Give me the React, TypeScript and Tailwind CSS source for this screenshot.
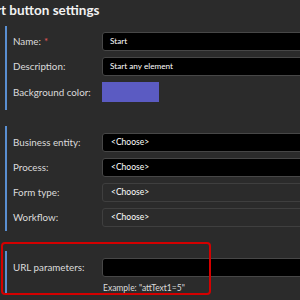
import React from "react";

const font = { fontFamily: "Lato, 'Noto Sans', sans-serif" };

function Row({ label, required, children }: { label: string; required?: boolean; children: React.ReactNode }) {
  return (
    <div className="flex items-center h-[19px]">
      <div className="w-[95px] shrink-0 pl-[6px] text-[9.8px] text-[#dcdcdc] whitespace-nowrap">
        {label}
        {required && <span className="text-[#e05a5a] ml-[3px]">*</span>}
      </div>
      {children}
    </div>
  );
}

function BlackInput({ value }: { value?: string }) {
  return (
    <div className="h-full w-[220px] shrink-0 bg-black border border-[#474747] rounded-[3px] flex items-center pl-[7px] text-[8.2px] text-white whitespace-nowrap">
      {value}
    </div>
  );
}

function Select({ value, dark }: { value: string; dark?: boolean }) {
  return (
    <div
      className={
        dark
          ? "h-full w-[220px] shrink-0 bg-black border border-[#474747] rounded-[3px] flex items-center pl-[8px] text-[8.5px] text-white"
          : "h-full w-[220px] shrink-0 bg-[#2b2b2b] border border-[#3f3f3f] rounded-[3px] flex items-center pl-[8px] text-[8.5px] text-white"
      }
    >
      {value}
    </div>
  );
}

export default function App() {
  return (
    <div className="w-[300px] h-[300px] bg-[#2b2b2b] overflow-hidden flex flex-col" style={font}>
      <div className="shrink-0 -ml-[23px] pt-[1px] h-[20px] text-[13.5px] font-bold text-[#f2f2f2] whitespace-nowrap leading-[18px]">
        Start button settings
      </div>
      <div className="shrink-0 mt-[6px] ml-[5px] border-l-2 border-[#5a8fd2] pt-[6px] pb-[8px] flex flex-col gap-[6px]">
        <Row label="Name:" required>
          <BlackInput value="Start" />
        </Row>
        <Row label="Description:">
          <BlackInput value="Start any element" />
        </Row>
        <div className="flex items-center h-[20px]">
          <div className="w-[95px] shrink-0 pl-[6px] text-[9.8px] text-[#dcdcdc] whitespace-nowrap">Background color:</div>
          <div className="h-full w-[57px] bg-[#5b5bc2]" />
        </div>
      </div>
      <div className="shrink-0 mt-[16px] ml-[5px] border-l-2 border-[#5a8fd2] pt-[7px] pb-[4px] flex flex-col gap-[6px]">
        <Row label="Business entity:">
          <Select value="<Choose>" dark />
        </Row>
        <Row label="Process:">
          <Select value="<Choose>" dark />
        </Row>
        <Row label="Form type:">
          <Select value="<Choose>" />
        </Row>
        <Row label="Workflow:">
          <Select value="<Choose>" />
        </Row>
      </div>
      <div className="shrink-0 relative mt-[11px] h-[53px] pt-[9px]">
        <div className="ml-[5px] h-[44px] border-l-2 border-[#5a8fd2] pt-[7px] flex flex-col">
          <Row label="URL parameters:">
            <BlackInput />
          </Row>
          <div className="pl-[96px] mt-[5px] text-[8.5px] text-[#dcdcdc] whitespace-nowrap">Example: "attText1=5"</div>
        </div>
        <div className="absolute left-[1px] top-0 w-[210px] h-[53px] border-2 border-[#d40000] rounded-[4px] pointer-events-none" />
      </div>
    </div>
  );
}
